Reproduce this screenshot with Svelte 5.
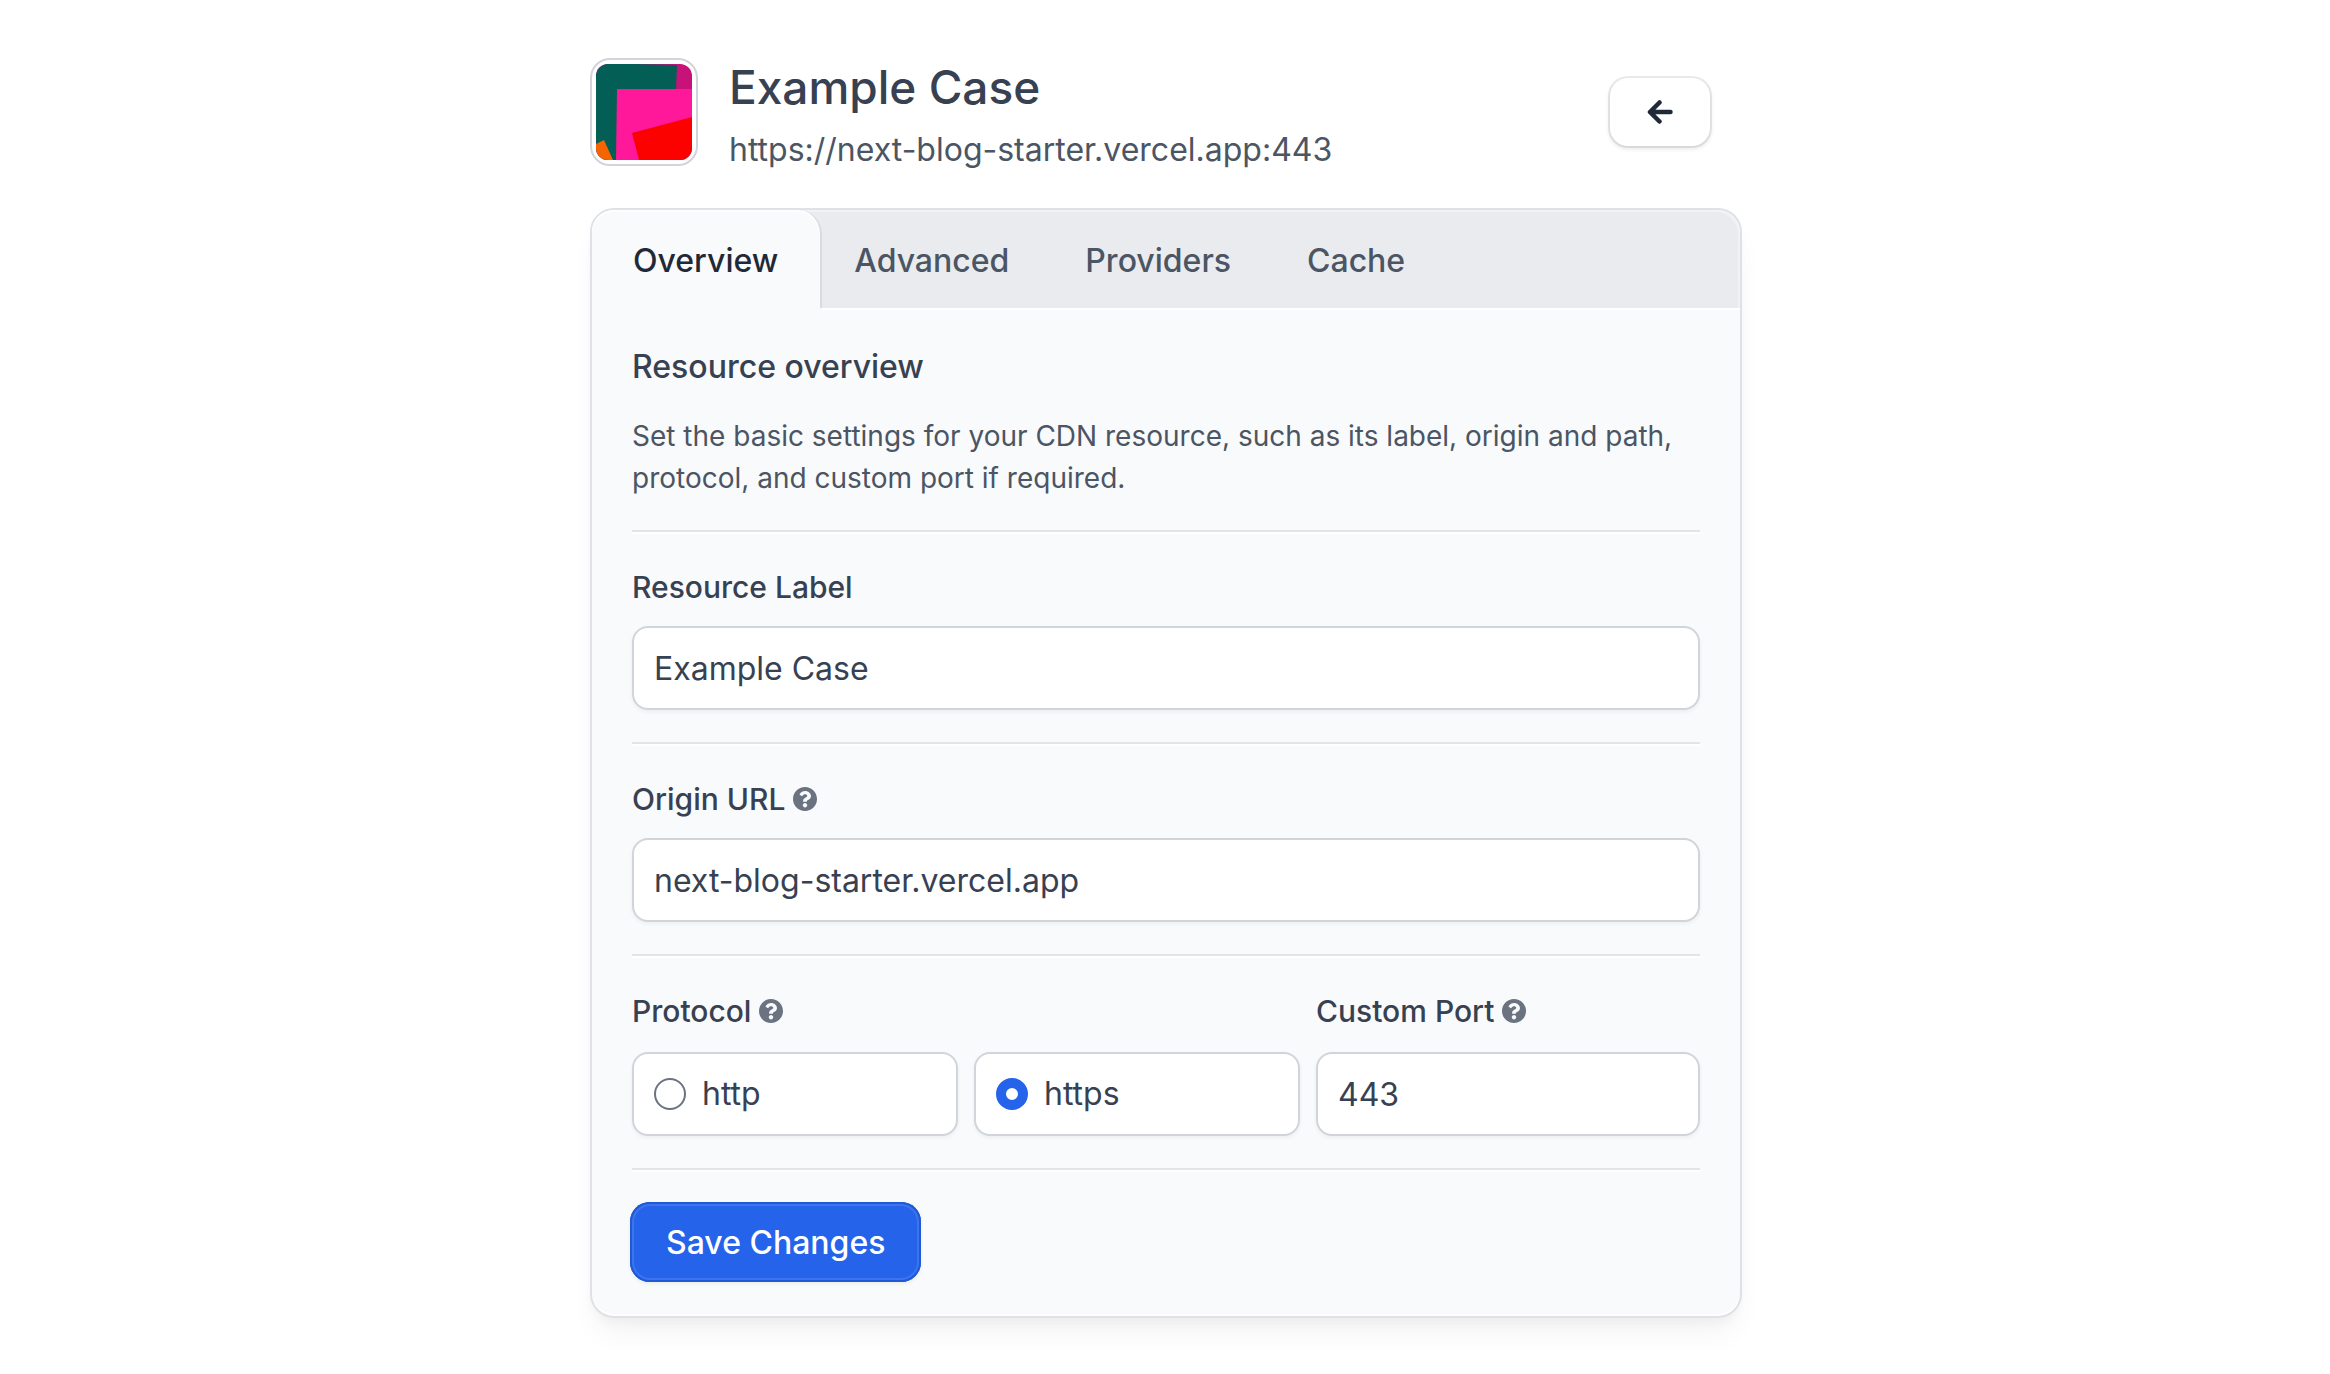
<script lang="ts">
  const tabs = ['Overview', 'Advanced', 'Providers', 'Cache'];
  let active = $state('Overview');
  let label = $state('Example Case');
  let origin = $state('next-blog-starter.vercel.app');
  let protocol = $state('https');
  let port = $state('443');
</script>

{#snippet help(text: string)}
  <button type="button" class="help" aria-label={text}>
    <svg viewBox="8 8 496 496" width="24" height="24" aria-hidden="true">
      <path fill="#6b7280" d="M504 256c0 136.997-111.043 248-248 248S8 392.997 8 256C8 119.083 119.043 8 256 8s248 111.083 248 248zM262.655 90c-54.497 0-89.255 22.957-116.549 63.758-3.536 5.286-2.353 12.415 2.715 16.258l34.699 26.310c5.205 3.947 12.621 3.008 16.665-2.122 17.864-22.658 30.113-35.797 57.303-35.797 20.429 0 45.698 13.148 45.698 32.958 0 14.976-12.363 22.667-32.534 33.976C247.128 238.528 216 254.941 216 296v4c0 6.627 5.373 12 12 12h56c6.627 0 12-5.373 12-12v-1.333c0-28.462 83.186-29.647 83.186-106.667 0-58.002-60.165-102-116.531-102zM256 338c-25.365 0-46 20.635-46 46 0 25.364 20.635 46 46 46s46-20.636 46-46c0-25.365-20.635-46-46-46z" />
    </svg>
  </button>
{/snippet}

<main>
  <header>
    <div class="avatar">
      <svg viewBox="0 0 96 96" aria-hidden="true">
        <rect width="96" height="96" fill="#c7127a" />
        <path d="M0 0H38L81 1L80 26L60 96H0Z" fill="#035e56" />
        <path d="M21 25H96V96H20Z" fill="#ff1899" />
        <path d="M36 69L96 53V96H43Z" fill="#fb0200" />
        <path d="M0 80L8 76L17 96H0Z" fill="#f56400" />
      </svg>
    </div>
    <div class="title">
      <h1>Example Case</h1>
      <p>https://next-blog-starter.vercel.app:443</p>
    </div>
    <button type="button" class="back" aria-label="Go back">
      <svg viewBox="0 0 26 24" width="26" height="24" aria-hidden="true">
        <path d="M12.500 2.500L3 12L12.500 21.500M3 12H23.500" />
      </svg>
    </button>
  </header>

  <section class="card">
    <nav>
      {#each tabs as tab}
        <button type="button" class:active={active === tab} onclick={() => (active = tab)}>{tab}</button>
      {/each}
    </nav>
    <form onsubmit={(e) => e.preventDefault()}>
      <div class="intro">
        <h2>Resource overview</h2>
        <p>Set the basic settings for your CDN resource, such as its label, origin and path, protocol, and custom port if required.</p>
      </div>
      <hr />
      <div class="field">
        <div class="caption"><label for="label">Resource Label</label></div>
        <input class="box" id="label" type="text" bind:value={label} />
      </div>
      <hr />
      <div class="field">
        <div class="caption"><label for="origin">Origin URL</label>{@render help('About the origin URL')}</div>
        <input class="box" id="origin" type="text" bind:value={origin} />
      </div>
      <hr />
      <div class="row">
        <div class="field" role="radiogroup" aria-labelledby="protocol">
          <div class="caption"><span id="protocol">Protocol</span>{@render help('About the protocol')}</div>
          <div class="choices">
            <label class="box"><input type="radio" name="protocol" value="http" bind:group={protocol} />http</label>
            <label class="box"><input type="radio" name="protocol" value="https" bind:group={protocol} />https</label>
          </div>
        </div>
        <div class="field">
          <div class="caption"><label for="port">Custom Port</label>{@render help('About the custom port')}</div>
          <input class="box" id="port" type="text" inputmode="numeric" bind:value={port} />
        </div>
      </div>
      <hr />
      <button type="submit" class="save">Save Changes</button>
    </form>
  </section>
</main>

<style>
  :global(body) {
    background: #fff;
  }
  main,
  main * {
    box-sizing: border-box;
  }
  main {
    max-width: 1154px;
    margin: 0 auto;
    padding: 58px 0 56px 2px;
    font-family: Inter, 'Liberation Sans', sans-serif;
    font-size: 32px;
    line-height: 48px;
    color: #374151;
  }
  h1,
  h2,
  p {
    margin: 0;
  }
  button,
  input {
    font: inherit;
    color: inherit;
    margin: 0;
  }
  button {
    border: 0;
    background: none;
    padding: 0;
    cursor: pointer;
  }
  svg {
    display: block;
  }
  header {
    display: flex;
    align-items: flex-start;
    padding-right: 32px;
    margin-bottom: 34px;
  }
  .avatar {
    flex: none;
    width: 108px;
    height: 108px;
    padding: 4px;
    border: 2px solid #d1d5db;
    border-radius: 20px;
  }
  .avatar svg {
    width: 96px;
    height: 96px;
    border-radius: 12px;
  }
  .title {
    flex: 1;
    min-width: 0;
    padding-left: 31px;
  }
  h1 {
    font-size: 46px;
    line-height: 58px;
    font-weight: 500;
  }
  .title p {
    margin-top: 10px;
    color: #4b5563;
    overflow-wrap: anywhere;
  }
  .back {
    flex: none;
    display: grid;
    place-items: center;
    width: 100px;
    height: 68px;
    margin-top: 20px;
    border-radius: 18px;
    background: #fff;
    box-shadow: 0 0 0 2px rgba(0, 0, 0, 0.07), 0 2px 4px 1px rgba(0, 0, 0, 0.1);
  }
  .back path {
    fill: none;
    stroke: #1f2937;
    stroke-width: 4.5;
    stroke-linecap: round;
    stroke-linejoin: round;
  }
  .card {
    border: 2px solid #e0e1e6;
    border-radius: 24px;
    background: #f9fafc;
    box-shadow: inset 0 -2px 0 #fff, 0 20px 30px -6px rgba(0, 0, 0, 0.05), 0 8px 12px -4px rgba(0, 0, 0, 0.04);
  }
  nav {
    display: flex;
    background: #eaebef;
    border-radius: 22px 22px 0 0;
    box-shadow: inset -2px 2px 0 #f1f2f6, 0 2px 0 #fff;
  }
  nav button {
    height: 98px;
    padding: 4px 38px 0;
    font-weight: 500;
    color: #4b5563;
  }
  nav .active {
    padding: 4px 42px 0 41px;
    margin-right: -6px;
    color: #1f2937;
    background: #f9fafc;
    border-right: 2px solid #d9dbe0;
    border-radius: 22px 24px 0 0;
    box-shadow: inset 0 2px 0 #fff, 0 2px 0 #f9fafc;
  }
  form {
    padding: 35px 40px 34px;
  }
  h2 {
    font-size: 32px;
    line-height: 48px;
    font-weight: 500;
  }
  .intro p {
    margin-top: 24px;
    font-size: 28px;
    line-height: 42px;
    color: #4b5563;
  }
  hr {
    height: 4px;
    margin: 32px 0 28px;
    border: 0;
    border-top: 2px solid #e2e4e8;
    background: #fff;
  }
  .intro + hr {
    margin-top: 31px;
  }
  .caption {
    display: flex;
    align-items: center;
    gap: 8px;
    height: 50px;
    margin-bottom: 14px;
    font-size: 30px;
    font-weight: 500;
  }
  .help {
    flex: none;
  }
  .box {
    display: flex;
    align-items: center;
    width: 100%;
    height: 84px;
    padding: 0 20px;
    border: 2px solid #d1d5db;
    border-radius: 16px;
    background: #fff;
    box-shadow: 0 2px 4px rgba(0, 0, 0, 0.05);
  }
  .row {
    display: grid;
    grid-template-columns: minmax(0, 1fr) 24rem;
    gap: 16px;
  }
  .row .caption {
    margin-bottom: 16px;
  }
  .choices {
    display: grid;
    grid-template-columns: 1fr 1fr;
    gap: 16px;
  }
  input[type='radio'] {
    appearance: none;
    width: 32px;
    height: 32px;
    margin-right: 16px;
    border: 2px solid #6b7280;
    border-radius: 50%;
    background: #fff;
  }
  input[type='radio']:checked {
    border: 10px solid #2563eb;
  }
  .save {
    height: 80px;
    margin: 2px 0 0 -2px;
    padding: 2px 36px 0;
    border-radius: 20px;
    background: #2563eb;
    color: #fff;
    font-weight: 500;
    box-shadow: inset 0 0 0 2px #2158d3, inset 0 0 0 4px #3b74ee, 0 2px 4px rgba(0, 0, 0, 0.06);
  }
</style>
